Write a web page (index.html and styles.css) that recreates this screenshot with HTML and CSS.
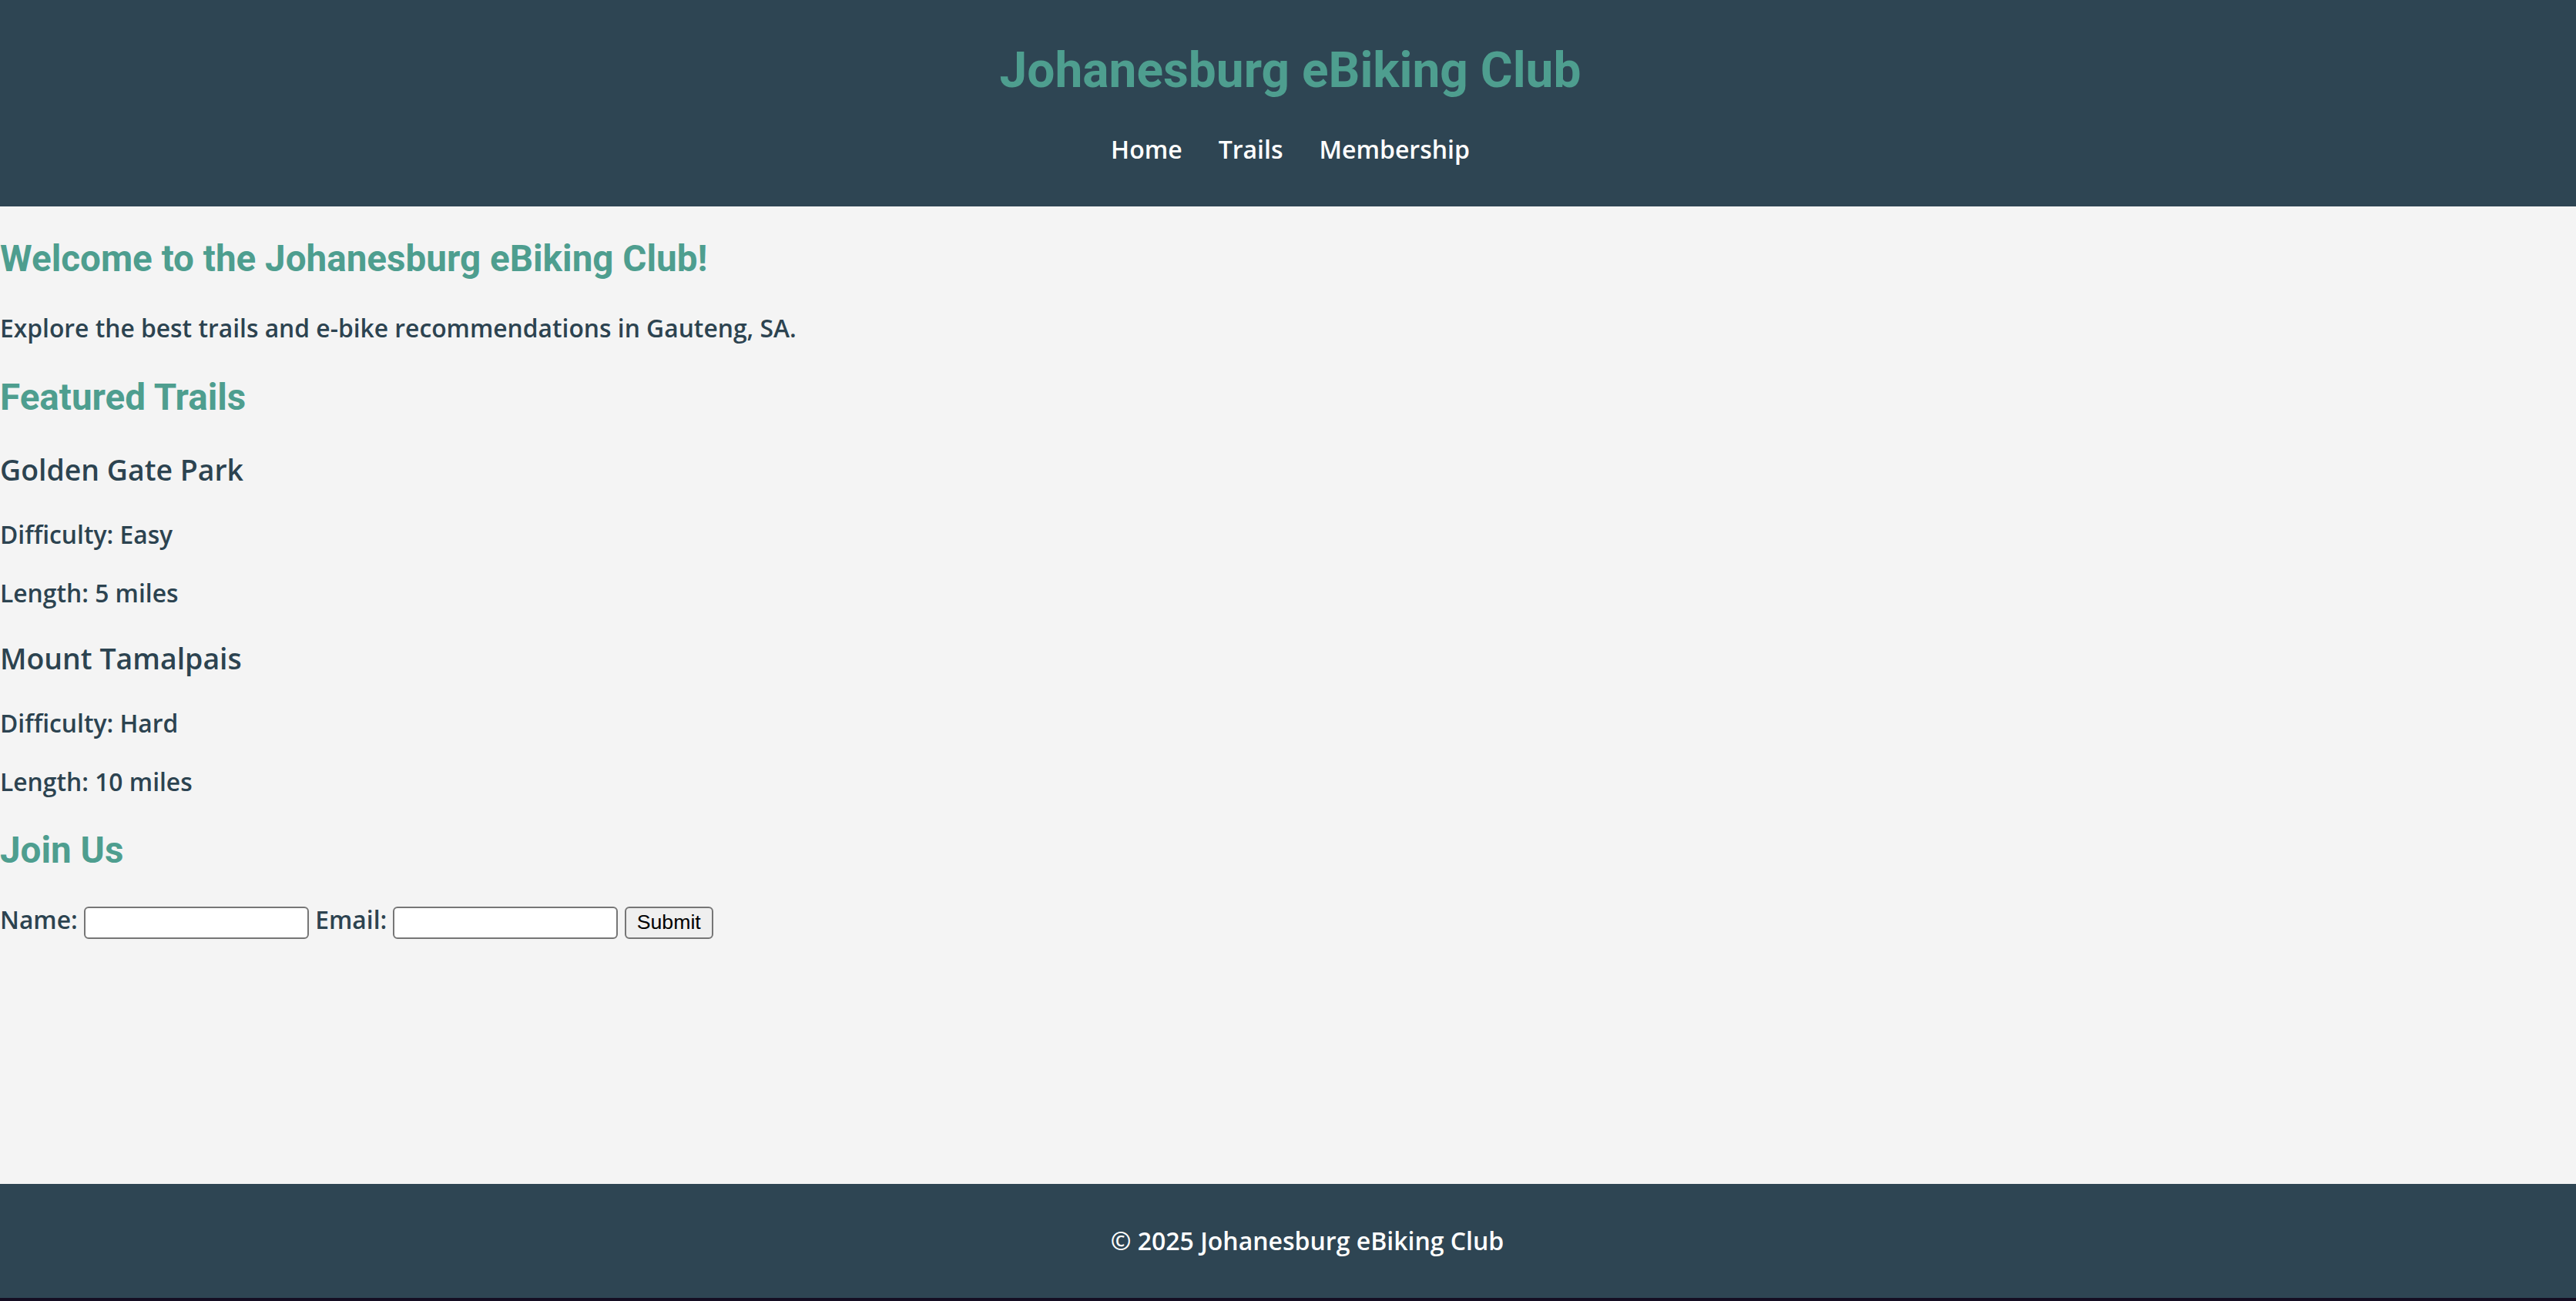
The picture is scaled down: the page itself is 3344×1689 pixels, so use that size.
FILE: index.html
```html
<!DOCTYPE html>
<html lang="en">
<head>
<meta charset="utf-8">
<title>Johanesburg eBiking Club</title>
<link rel="stylesheet" href="styles.css">
</head>
<body>
<div class="page">
  <header class="site-header">
    <h1 class="site-title">Johanesburg eBiking Club</h1>
    <nav class="site-nav">
      <a href="#" class="nav-link">Home</a>
      <a href="#" class="nav-link">Trails</a>
      <a href="#" class="nav-link">Membership</a>
    </nav>
  </header>
  <main class="content">
    <h2 class="section-title">Welcome to the Johanesburg eBiking Club!</h2>
    <p class="text">Explore the best trails and e-bike recommendations in Gauteng, SA.</p>
    <h2 class="section-title">Featured Trails</h2>
    <h3 class="trail-name">Golden Gate Park</h3>
    <p class="text">Difficulty: Easy</p>
    <p class="text">Length: 5 miles</p>
    <h3 class="trail-name">Mount Tamalpais</h3>
    <p class="text">Difficulty: Hard</p>
    <p class="text">Length: 10 miles</p>
    <h2 class="section-title">Join Us</h2>
    <form class="join-form">
      <label class="form-label" for="name">Name:</label>
      <input class="form-input" type="text" id="name">
      <label class="form-label" for="email">Email:</label>
      <input class="form-input" type="email" id="email">
      <button class="form-button" type="button">Submit</button>
    </form>
  </main>
  <footer class="site-footer">
    <p class="footer-text">© 2025 Johanesburg eBiking Club</p>
  </footer>
</div>
</body>
</html>
```

FILE: styles.css
```css
html {
  background: #140d22;
}
body {
  margin: 0;
  font-family: "Open Sans", "Liberation Sans", sans-serif;
  font-weight: 600;
  color: #2c4350;
}
.page {
  min-height: calc(100vh - 4px);
  display: flex;
  flex-direction: column;
  background: #f4f4f4;
}
.site-header {
  background: #2e4553;
  text-align: center;
  padding: 54px 0 52px 6px;
}
.site-title {
  margin: 0;
  font-family: Roboto, "Liberation Sans", sans-serif;
  font-weight: 700;
  font-size: 64px;
  line-height: 75px;
  color: #4e9e8f;
}
.site-nav {
  margin-top: 43px;
  display: flex;
  justify-content: center;
  gap: 47px;
  line-height: 44px;
}
.nav-link {
  color: #ffffff;
  text-decoration: none;
  font-size: 32px;
  font-weight: 600;
}
.content {
  flex: 1;
  padding: 0;
}
.section-title {
  font-family: Roboto, "Liberation Sans", sans-serif;
  font-weight: 700;
  font-size: 47.6px;
  line-height: 56px;
  margin: 40px 0;
  color: #4e9e8f;
}
.trail-name {
  font-size: 37.44px;
  line-height: 51px;
  font-weight: 600;
  margin: 37.44px 0;
  color: #2c4350;
}
.text {
  font-size: 31.8px;
  line-height: 43.6px;
  margin: 32px 0;
}
.join-form {
  font-size: 31.8px;
  line-height: 43.6px;
  margin: 0 0 32px;
}
.form-label {
  font-weight: 600;
}
.form-input {
  box-sizing: border-box;
  width: 292px;
  height: 42px;
  padding: 0 4px;
  font-family: Arial, "Liberation Sans", sans-serif;
  font-size: 26.67px;
  border: 2px solid #767676;
  border-radius: 6px;
  background: #ffffff;
}
.form-button {
  box-sizing: border-box;
  height: 42px;
  padding: 0 14px;
  font-family: Arial, "Liberation Sans", sans-serif;
  font-size: 26.67px;
  color: #000000;
  background: #efefef;
  border: 2px solid #767676;
  border-radius: 6px;
}
.site-footer {
  background: #2e4553;
  text-align: center;
  padding: 20px 0 20px 50px;
}
.footer-text {
  margin: 32px 0;
  color: #ffffff;
  font-size: 32px;
  line-height: 43.6px;
  font-weight: 600;
}
```
